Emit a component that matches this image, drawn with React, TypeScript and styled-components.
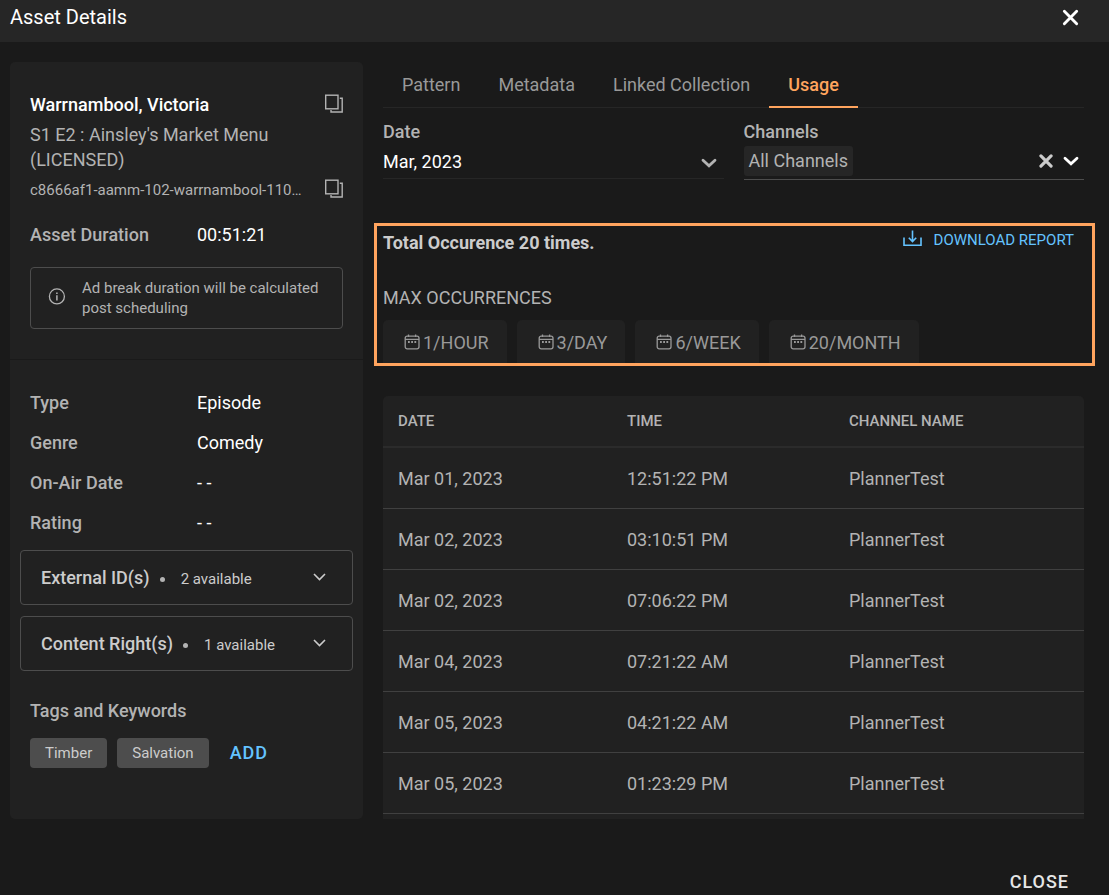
import React from "react";
import styled, { createGlobalStyle } from "styled-components";

const GlobalStyle = createGlobalStyle`
  *, *::before, *::after { box-sizing: border-box; }
  body { margin: 0; background: #1a1a1a; color: #b3b3b3; font-family: Roboto, sans-serif; font-size: 18px; line-height: 25px; }
  h1, h2, h3, p, dl, dd, dt, ul { margin: 0; padding: 0; font: inherit; }
  ul { list-style: none; }
  button { font: inherit; color: inherit; background: none; border: 0; padding: 0; cursor: pointer; }
  svg { display: block; flex: none; }
`;

const Dialog = styled.main`
  display: flex;
  flex-direction: column;
`;

const Header = styled.header`
  display: flex;
  justify-content: space-between;
  align-items: center;
  height: 42px;
  padding: 0 30px 8px 10px;
  background: #262626;
  color: #fff;
`;

const Title = styled.h1`
  && { font-size: 20px; }
`;

const Body = styled.div`
  display: grid;
  grid-template-columns: 353px minmax(0, 1fr);
  gap: 20px;
  padding: 20px 25px 0 10px;
`;

const Sidebar = styled.aside`
  background: #212121;
  border-radius: 5px;
`;

const Summary = styled.section`
  display: flex;
  flex-direction: column;
  padding: 30px 20px;
  border-bottom: 1px solid #1a1a1a;
`;

const CopyRow = styled.div`
  display: flex;
  justify-content: space-between;
  align-items: center;
`;

const AssetName = styled.h2`
  && { color: #fff; font-weight: 500; }
`;

const Subtitle = styled.p`
  && { margin: 5px 0; }
`;

const AssetId = styled.span`
  width: 272px;
  padding-top: 2px;
  overflow: hidden;
  text-overflow: ellipsis;
  white-space: nowrap;
  font-size: 15px;
  line-height: 23px;
`;

const Facts = styled.dl<{ $top: number }>`
  && { margin-top: ${(p) => p.$top}px; }
`;

const Fact = styled.div<{ $tall?: boolean }>`
  display: grid;
  grid-template-columns: 167px 1fr;
  align-items: center;
  height: ${(p) => (p.$tall ? 40 : 25)}px;
`;

const FactLabel = styled.dt`
  && { font-weight: 500; }
`;

const FactValue = styled.dd`
  color: #fff;
`;

const Notice = styled.p`
  && {
    display: flex;
    align-items: center;
    gap: 16px;
    margin-top: 20px;
    padding: 10px 17px;
    border: 1px solid #4d4d4d;
    border-radius: 4px;
    font-size: 15px;
    line-height: 20px;
  }
`;

const Details = styled.section`
  padding: 22px 10px 51px;
`;

const Inset = styled.div`
  padding: 0 10px;
`;

const Accordions = styled.div`
  display: grid;
  gap: 11px;
  margin: 8px 0 27px;
`;

const Accordion = styled.button`
  && {
    display: flex;
    align-items: center;
    height: 55px;
    padding: 0 26px 0 20px;
    border: 1px solid #4d4d4d;
    border-radius: 4px;
    text-align: left;
  }
`;

const AccordionName = styled.span`
  font-weight: 500;
  color: #ccc;
`;

const Dot = styled.span`
  width: 5px;
  height: 5px;
  margin: 4px 16px 0 10px;
  border-radius: 50%;
  background: #b3b3b3;
`;

const Count = styled.span`
  flex: 1;
  font-size: 15px;
  padding-top: 3px;
  color: #ccc;
`;

const TagsTitle = styled.h3`
  && { font-weight: 500; }
`;

const Tags = styled.div`
  display: flex;
  align-items: center;
  gap: 10px;
  margin-top: 15px;
`;

const Tag = styled.span`
  padding: 0 15px;
  border-radius: 4px;
  background: #4d4d4d;
  color: #ccc;
  font-size: 15px;
  line-height: 30px;
`;

const AddButton = styled.button`
  && { padding: 0 0 2px 11px; color: #64c3ff; font-weight: 500; letter-spacing: 1px; }
`;

const Main = styled.section`
  min-width: 0;
`;

const Tabs = styled.div`
  display: flex;
  height: 46px;
  border-bottom: 1px solid #262626;
`;

const Tab = styled.button<{ $active?: boolean }>`
  && {
    height: 46px;
    padding: 0 19px;
    color: ${(p) => (p.$active ? "#ffa45e" : "#999")};
    font-weight: ${(p) => (p.$active ? 500 : 400)};
    border-bottom: 2px solid ${(p) => (p.$active ? "#ffa45e" : "transparent")};
  }
`;

const Filters = styled.div`
  display: grid;
  grid-template-columns: repeat(2, minmax(0, 1fr));
  align-items: start;
  gap: 20px;
  margin-top: 11px;
`;

const Field = styled.div`
  display: flex;
  flex-direction: column;
`;

const FieldLabel = styled.label`
  font-weight: 500;
`;

const SelectBox = styled.div`
  display: grid;
  align-items: center;
  height: 35px;
  border-bottom: 1px solid #262626;
  > * { grid-area: 1 / 1; }
  > svg { justify-self: end; margin: 4px 7px 0 0; pointer-events: none; }
`;

const Select = styled.select`
  appearance: none;
  width: 100%;
  height: 30px;
  padding: 0;
  border: 0;
  background: transparent;
  color: #fff;
  font: inherit;
`;

const MultiSelect = styled.div`
  display: flex;
  align-items: center;
  height: 36px;
  padding: 2px 5px 3px 0;
  border-bottom: 1px solid #4d4d4d;
`;

const Chip = styled.span`
  padding: 0 5px;
  border-radius: 3px;
  background: #262626;
  line-height: 30px;
`;

const ChipInput = styled.input`
  flex: 1;
  min-width: 0;
  border: 0;
  background: transparent;
  color: #fff;
  font: inherit;
  outline: 0;
`;

const IconButton = styled.button<{ $bright?: boolean }>`
  && { display: flex; color: ${(p) => (p.$bright ? "#fff" : "#ccc")}; }
  && + && { margin-left: 10px; }
`;

const Highlight = styled.section`
  margin: 43px -11px 0 -9px;
  padding: 0 18px 0 6px;
  border: 3px solid #ffa45e;
`;

const HighlightTop = styled.div`
  display: flex;
  justify-content: space-between;
  align-items: flex-start;
`;

const Total = styled.h2`
  && { padding-top: 4px; font-weight: 700; color: #ccc; }
`;

const Download = styled.button`
  && { display: flex; align-items: center; gap: 12px; color: #64c3ff; font-size: 15px; line-height: 29px; }
  svg { margin-bottom: 4px; }
`;

const MaxTitle = styled.h3`
  && { margin: 30px 0 10px; }
`;

const Limits = styled.ul`
  display: flex;
  gap: 10px;
`;

const Limit = styled.li`
  display: flex;
  align-items: center;
  gap: 3px;
  height: 43px;
  padding: 1px 18px 0 21px;
  border-radius: 5px 5px 0 0;
  background: #212121;
  color: #999;
`;

const TablePanel = styled.div`
  margin-top: 30px;
  padding-bottom: 5px;
  background: #212121;
  border-radius: 5px 5px 0 0;
`;

const Table = styled.table`
  width: 100%;
  table-layout: fixed;
  border-spacing: 0;
  text-align: left;
`;

const HeadCell = styled.th<{ $width?: number }>`
  width: ${(p) => (p.$width ? `${p.$width}px` : "auto")};
  height: 52px;
  padding: 0 15px;
  border-bottom: 2px solid #2b2b2b;
  font-size: 15px;
  font-weight: 500;
`;

const Cell = styled.td`
  height: 61px;
  padding: 0 15px;
  border-bottom: 1px solid #404040;
`;

const Footer = styled.footer`
  display: flex;
  justify-content: flex-end;
  padding: 50px 40px 0 0;
`;

const CloseButton = styled.button`
  && { color: #e6e6e6; font-weight: 500; letter-spacing: 1px; line-height: 26px; }
`;

const CopyIcon = () => (
  <svg width="19" height="22" viewBox="0 0 19 22" fill="none" stroke="#b3b3b3" strokeWidth="1.4" aria-hidden="true">
    <rect x="1.7" y="1.2" width="12.3" height="13.6" />
    <path d="M15.8 4.2h2.4v13.8H7v-2" />
  </svg>
);

const InfoIcon = () => (
  <svg width="18" height="20" viewBox="0 0 18 20" fill="none" stroke="#b3b3b3" strokeWidth="1.3" aria-hidden="true">
    <circle cx="8.9" cy="8.4" r="7.5" />
    <path d="M8.9 7.2v5.2M8.9 4.4v1.5" strokeWidth="1.5" />
  </svg>
);

const ThinChevron = () => (
  <svg width="13" height="10" viewBox="0 0 13 10" fill="none" stroke="#ccc" strokeWidth="1.6" aria-hidden="true">
    <path d="M1 1l5.5 5.5L12 1" />
  </svg>
);

const Chevron = () => (
  <svg width="16" height="10" viewBox="0 0 16 10" fill="none" stroke="currentColor" strokeWidth="2.8" strokeLinecap="round" aria-hidden="true">
    <path d="M2 2.2l6 5.6 6-5.6" />
  </svg>
);

const CrossIcon = ({ size, stroke }: { size: number; stroke: number }) => (
  <svg width={size} height={size} viewBox="0 0 16 16" fill="none" stroke="currentColor" strokeWidth={stroke} strokeLinecap="round" aria-hidden="true">
    <path d="M2.2 2.2l11.6 11.6M13.8 2.2L2.2 13.8" />
  </svg>
);

const DownloadIcon = () => (
  <svg width="19" height="17" viewBox="0 0 19 17" fill="none" stroke="currentColor" strokeWidth="1.6" aria-hidden="true">
    <path d="M1 7.5v7.7h17V7.5M9.5 .5v11M5.8 7.8l3.7 3.7 3.7-3.7" />
  </svg>
);

const CalendarIcon = () => (
  <svg width="16" height="16" viewBox="0 0 16 16" fill="none" stroke="currentColor" strokeWidth="1.3" aria-hidden="true">
    <rect x="1.2" y="2.2" width="13.8" height="12.6" rx="2" />
    <path d="M1 5.3h14M4.5 .5v2.5M11.6 .5v2.5" />
    <path d="M4 8h1.8M7.2 8H9M10.4 8h1.8" strokeWidth="1.8" />
  </svg>
);

const facts = [
  ["Type", "Episode"],
  ["Genre", "Comedy"],
  ["On-Air Date", "- -"],
  ["Rating", "- -"],
];

const limits = ["1/HOUR", "3/DAY", "6/WEEK", "20/MONTH"];

const rows = [
  ["Mar 01, 2023", "12:51:22 PM", "PlannerTest"],
  ["Mar 02, 2023", "03:10:51 PM", "PlannerTest"],
  ["Mar 02, 2023", "07:06:22 PM", "PlannerTest"],
  ["Mar 04, 2023", "07:21:22 AM", "PlannerTest"],
  ["Mar 05, 2023", "04:21:22 AM", "PlannerTest"],
  ["Mar 05, 2023", "01:23:29 PM", "PlannerTest"],
];

export default function App() {
  return (
    <Dialog>
      <GlobalStyle />
      <Header>
        <Title>Asset Details</Title>
        <IconButton $bright aria-label="Close dialog"><CrossIcon size={17} stroke={2.7} /></IconButton>
      </Header>
      <Body>
        <Sidebar>
          <Summary>
            <CopyRow>
              <AssetName>Warrnambool, Victoria</AssetName>
              <IconButton aria-label="Copy name"><CopyIcon /></IconButton>
            </CopyRow>
            <Subtitle>S1 E2 : Ainsley's Market Menu (LICENSED)</Subtitle>
            <CopyRow>
              <AssetId>c8666af1-aamm-102-warrnambool-110...</AssetId>
              <IconButton aria-label="Copy ID"><CopyIcon /></IconButton>
            </CopyRow>
            <Facts $top={20}>
              <Fact>
                <FactLabel>Asset Duration</FactLabel>
                <FactValue>00:51:21</FactValue>
              </Fact>
            </Facts>
            <Notice>
              <InfoIcon />
              <span>Ad break duration will be calculated post scheduling</span>
            </Notice>
          </Summary>
          <Details>
            <Inset>
              <Facts $top={0}>
                {facts.map(([label, value]) => (
                  <Fact key={label} $tall>
                    <FactLabel>{label}</FactLabel>
                    <FactValue>{value}</FactValue>
                  </Fact>
                ))}
              </Facts>
            </Inset>
            <Accordions>
              <Accordion aria-expanded="false">
                <AccordionName>External ID(s)</AccordionName>
                <Dot />
                <Count>2 available</Count>
                <ThinChevron />
              </Accordion>
              <Accordion aria-expanded="false">
                <AccordionName>Content Right(s)</AccordionName>
                <Dot />
                <Count>1 available</Count>
                <ThinChevron />
              </Accordion>
            </Accordions>
            <Inset>
              <TagsTitle>Tags and Keywords</TagsTitle>
              <Tags>
                <Tag>Timber</Tag>
                <Tag>Salvation</Tag>
                <AddButton>ADD</AddButton>
              </Tags>
            </Inset>
          </Details>
        </Sidebar>
        <Main>
          <Tabs role="tablist">
            <Tab role="tab">Pattern</Tab>
            <Tab role="tab">Metadata</Tab>
            <Tab role="tab">Linked Collection</Tab>
            <Tab role="tab" aria-selected="true" $active>Usage</Tab>
          </Tabs>
          <Filters>
            <Field>
              <FieldLabel htmlFor="date">Date</FieldLabel>
              <SelectBox>
                <Select id="date">
                  <option>Mar, 2023</option>
                </Select>
                <Chevron />
              </SelectBox>
            </Field>
            <Field>
              <FieldLabel htmlFor="channels">Channels</FieldLabel>
              <MultiSelect>
                <Chip>All Channels</Chip>
                <ChipInput id="channels" role="combobox" aria-expanded="false" />
                <IconButton aria-label="Clear channels"><CrossIcon size={14} stroke={3.6} /></IconButton>
                <IconButton $bright aria-label="Open channels"><Chevron /></IconButton>
              </MultiSelect>
            </Field>
          </Filters>
          <Highlight>
            <HighlightTop>
              <Total>Total Occurence 20 times.</Total>
              <Download><DownloadIcon />DOWNLOAD REPORT</Download>
            </HighlightTop>
            <MaxTitle>MAX OCCURRENCES</MaxTitle>
            <Limits>
              {limits.map((limit) => (
                <Limit key={limit}><CalendarIcon />{limit}</Limit>
              ))}
            </Limits>
          </Highlight>
          <TablePanel>
            <Table>
              <thead>
                <tr>
                  <HeadCell $width={229}>DATE</HeadCell>
                  <HeadCell $width={222}>TIME</HeadCell>
                  <HeadCell>CHANNEL NAME</HeadCell>
                </tr>
              </thead>
              <tbody>
                {rows.map(([date, time, channel]) => (
                  <tr key={date + time}>
                    <Cell>{date}</Cell>
                    <Cell>{time}</Cell>
                    <Cell>{channel}</Cell>
                  </tr>
                ))}
              </tbody>
            </Table>
          </TablePanel>
        </Main>
      </Body>
      <Footer>
        <CloseButton>CLOSE</CloseButton>
      </Footer>
    </Dialog>
  );
}
